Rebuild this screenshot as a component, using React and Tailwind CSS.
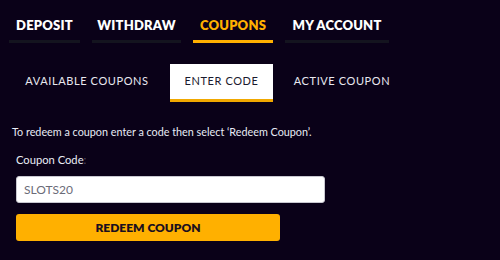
export default function App() {
  const top = [
    { t: "DEPOSIT", w: "w-[71px]" },
    { t: "WITHDRAW", w: "w-[89px]" },
    { t: "COUPONS", w: "w-[80px]", active: true },
    { t: "MY ACCOUNT", w: "w-[104px]" },
  ];
  return (
    <div className="w-[500px] h-[260px] bg-[#0a0118] overflow-hidden" style={{ fontFamily: '"Lato", "Noto Sans", sans-serif' }}>
      <div className="flex gap-[12px] pl-[9px] pt-[16px]">
        {top.map((x) => (
          <div key={x.t} className={`${x.w} flex flex-col items-center`}>
            <div className={`h-[24px] text-[13px] font-extrabold tracking-[0.2px] leading-[13px] pt-[3px] ${x.active ? "text-[#ffb000]" : "text-white"}`}>{x.t}</div>
            <div className={`w-full h-[3px] ${x.active ? "bg-[#ffb000]" : "bg-[#14141f]"}`}></div>
          </div>
        ))}
      </div>
      <div className="flex pl-[12px] mt-[21px] h-[38px]">
        <div className="w-[150px] mr-[8px] flex items-center justify-center text-[11px] tracking-[0.6px] text-[#e8e8f0] pb-[3px]">AVAILABLE COUPONS</div>
        <div className="w-[103px] flex items-center justify-center text-[11px] tracking-[0.6px] text-[#1a1a2e] bg-white border-b-[3px] border-[#f0a800]">ENTER CODE</div>
        <div className="w-[138px] flex items-center justify-center text-[11px] tracking-[0.6px] text-[#e8e8f0] pb-[3px]">ACTIVE COUPON</div>
      </div>
      <div className="pl-[12px] mt-[23px] text-[10.8px] text-[#e8ecf5] leading-[14px]">
        To redeem a coupon enter a code then select ‘Redeem Coupon’.
      </div>
      <div className="pl-[16px] mt-[14px] text-[11.2px] text-[#e8ecf5] leading-[14px]">
        Coupon Code<span className="text-[#55506a]">:</span>
      </div>
      <div className="ml-[16px] mt-[9px] w-[309px] h-[27px] bg-white rounded-[3px] border border-[#c8c8d0] flex items-center px-[7px] text-[12px] text-[#6b6b78]">
        SLOTS20
      </div>
      <div className="ml-[16px] mt-[11px] w-[264px] h-[27px] bg-[#ffb000] rounded-[3px] flex items-center justify-center text-[12px] font-extrabold text-[#1a0f1f]">
        REDEEM COUPON
      </div>
    </div>
  );
}
